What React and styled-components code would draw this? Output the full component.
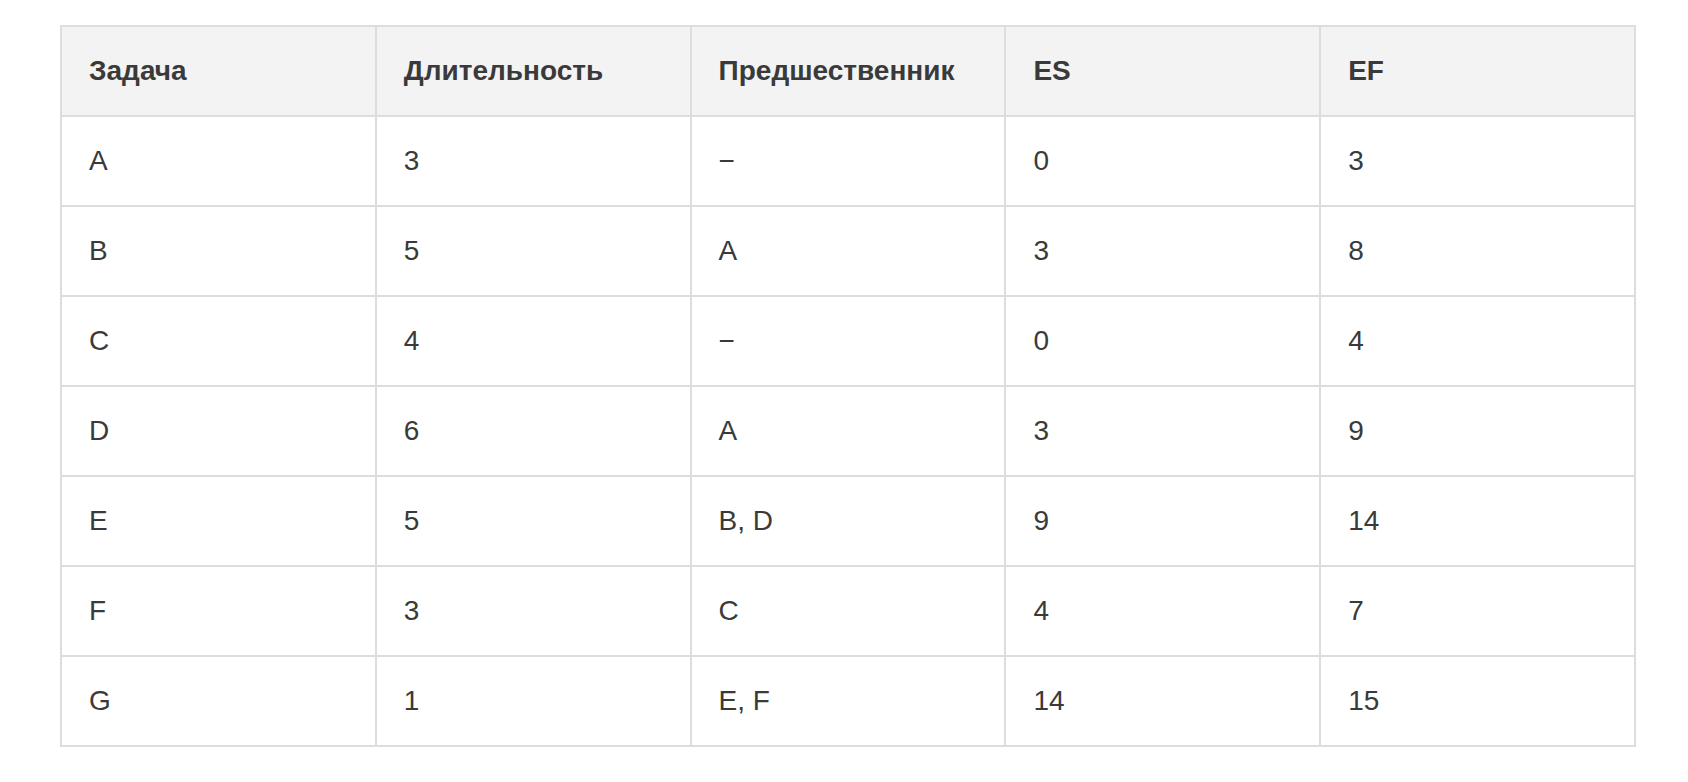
import React from "react"
import styled, { createGlobalStyle } from "styled-components"

const GlobalStyle = createGlobalStyle`
  html, body {
    margin: 0;
    padding: 0;
    background: #ffffff;
  }
  body {
    font-family: "Liberation Sans", Arial, Helvetica, sans-serif;
    color: #333333;
  }
`

const Page = styled.div`
  padding: 25px 52px 0 60px;
`

const Table = styled.table`
  width: 1576px;
  border-collapse: collapse;
  table-layout: fixed;
  border: 2px solid #dddddd;
  font-family: "Liberation Sans", Arial, Helvetica, sans-serif;
  font-size: 28px;
  line-height: 1.2;
`

const HeadCell = styled.th`
  height: 88px;
  padding: 0 27px;
  text-align: left;
  font-weight: bold;
  color: #3a3a3a;
  background: #f3f3f3;
  border: 2px solid #dddddd;
`

const Cell = styled.td`
  height: 88px;
  padding: 0 27px;
  text-align: left;
  color: #3a3a3a;
  border: 2px solid #dddddd;
`

const columns = ["Задача", "Длительность", "Предшественник", "ES", "EF"]

const rows = [
  ["A", "3", "−", "0", "3"],
  ["B", "5", "A", "3", "8"],
  ["C", "4", "−", "0", "4"],
  ["D", "6", "A", "3", "9"],
  ["E", "5", "B, D", "9", "14"],
  ["F", "3", "C", "4", "7"],
  ["G", "1", "E, F", "14", "15"],
]

export default function App() {
  return (
    <Page>
      <GlobalStyle />
      <Table>
        <thead>
          <tr>
            {columns.map(col => (
              <HeadCell key={col}>{col}</HeadCell>
            ))}
          </tr>
        </thead>
        <tbody>
          {rows.map(row => (
            <tr key={row[0]}>
              {row.map((value, i) => (
                <Cell key={i}>{value}</Cell>
              ))}
            </tr>
          ))}
        </tbody>
      </Table>
    </Page>
  )
}
